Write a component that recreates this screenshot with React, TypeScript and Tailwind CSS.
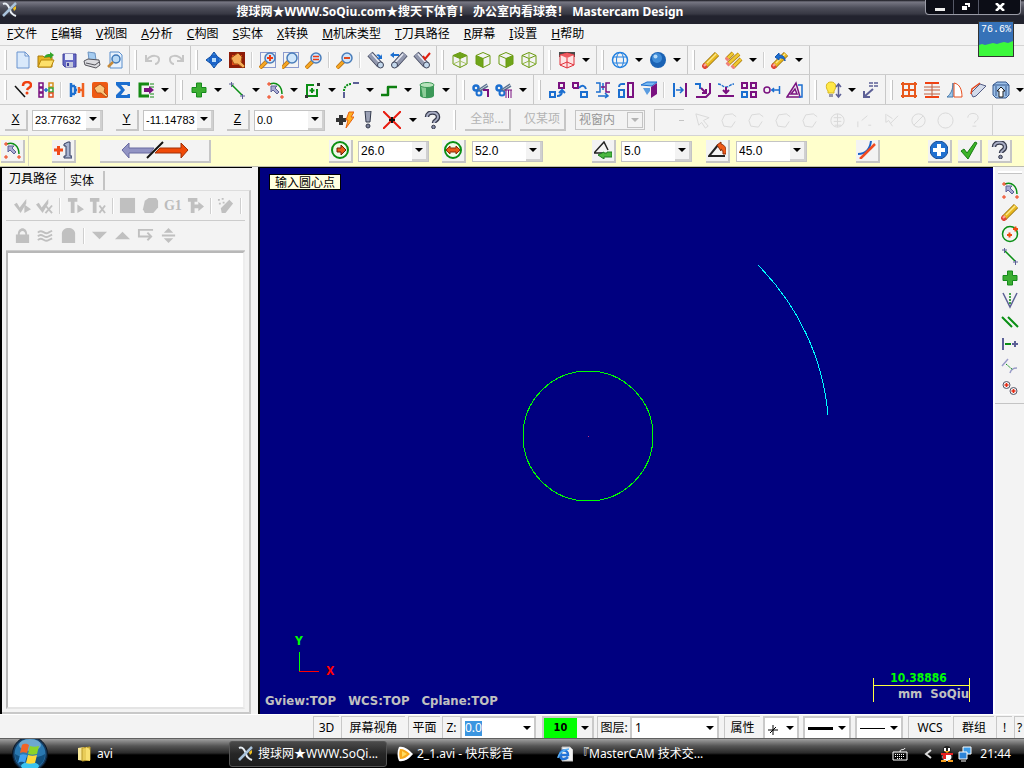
import type { ReactNode } from 'react'
import clsx from 'clsx'

const green = '#0a8f14'
const blue = '#1c6fd0'
const purple = '#7a1280'
const slate = '#5c6096'

const plus = 'M6.5 2h5v4.5h4.5v5h-4.5v4.5h-5v-4.5h-4.5v-5h4.5z'
const question = 'M4 6c0-6 11-6 11 0c0 4-4 3-4 6'
const cube = 'M9 1.5l7 3v8.500l-7 3.500l-7-3.500v-8.500zM2 4.500l7 3l7-3M9 7.500v9'

const lens = (cx = 11, cy = 7) => (
  <>
    <path d={`M${cx - 3} ${cy + 3}L${cx - 10} ${cy + 10}`} stroke="#b06a10" strokeWidth="4" />
    <path d={`M${cx - 3} ${cy + 3}L${cx - 10} ${cy + 10}`} stroke="#f5a623" strokeWidth="2.5" />
    <circle cx={cx} cy={cy} r="5" fill="#cfe6fb" stroke="#4a7dba" strokeWidth="1.5" />
  </>
)

const pencil = (
  <>
    <path d="M3 15L15 3" stroke="#9a7410" strokeWidth="6" />
    <path d="M3 15L15 3" stroke="#e8b820" strokeWidth="4.5" />
    <path d="M5 12L14 3" stroke="#fbe88a" strokeWidth="1.5" />
    <path d="M1 17L4 14" stroke="#e04838" strokeWidth="5.500" />
    <path d="M2 15L4 13" stroke="#fba8a0" strokeWidth="2" />
  </>
)

const flash = (
  <>
    <path d="M3 3L13 14" stroke="#3c4258" strokeWidth="7" />
    <path d="M3 3L13 14" stroke="#9298ae" strokeWidth="5.500" />
    <path d="M5 3L14 13" stroke="#e8ebf4" strokeWidth="1.500" />
    <circle cx="13.5" cy="14" r="3" fill="#c4d8ec" stroke="#3c4258" />
  </>
)

const scissors = (
  <>
    <circle cx="4" cy="7" r="2.500" fill="none" stroke={blue} strokeWidth="2.5" />
    <circle cx="7" cy="12" r="2.500" fill="none" stroke={blue} strokeWidth="2" />
    <path d="M6 9l9-6M8 10l8-5" stroke="#5b7391" strokeWidth="1.500" />
  </>
)

const arcPoints = (
  <>
    <path d="M4 3c7-3 12 3 12 10" stroke={green} strokeWidth="1.5" fill="none" />
    <path d="M1 3h4M3 1v4M1 16h4M3 14v4M14 16h4M16 14v4" stroke="#f03a10" />
    <path d="M5 5h6l-2 2l4 4l-2 2l-4-4l-2 2z" fill="#a9abd2" stroke={slate} />
  </>
)

const lineEnds = (
  <>
    <path d="M4 4l10 10" stroke={green} strokeWidth="1.5" />
    <path d="M1 3h5M3.500 1v5M12 15h5M14.500 13v5" stroke={slate} />
  </>
)

const greenPlus = <path d={plus} fill="#3cae32" stroke="#168a1c" />

const icons: Record<string, ReactNode> = {
  new: <path d="M3 1h8l4 4v12h-12zM11 1v4h4" fill="#d9e9fb" stroke="#6b94cf" />,
  open: (
    <>
      <path d="M1 5h5l1 1h8v10h-14z" fill="#e8b420" stroke="#a8780c" />
      <path d="M4 9h13l-3 7h-13z" fill="#fde06a" stroke="#b8860b" />
      <path d="M7 7c1-4 4-4 6-4v-2l4 3l-4 4v-2c-2 0-4 0-6 1z" fill="#35a52c" />
    </>
  ),
  save: (
    <>
      <path d="M3 3h13v13h-11l-2-2z" fill="#6468c4" stroke="#40409a" />
      <path d="M5 3h8v6h-8z" fill="#e8ecf8" />
      <path d="M6 11h7v5h-7z" fill="#c4c8dc" />
      <path d="M7 12h2v3h-2z" fill="#40409a" />
    </>
  ),
  print: (
    <>
      <path d="M5 1l7 1l1 7h-7z" fill="#a5ccf0" stroke="#6d93c0" />
      <path d="M1 10l4-2l11 1l1 5l-4 3l-11-3z" fill="#dcdce0" stroke="#55555c" />
      <path d="M3 12l9 2l4-3" stroke="#55555c" fill="none" />
    </>
  ),
  preview: (
    <>
      <path d="M4 1h9l3 3v13h-12z" fill="#e8f2fd" stroke="#5b8fcc" />
      <circle cx="10" cy="8" r="4" fill="#b9d9f5" stroke="#3f78b8" strokeWidth="1.500" />
      <path d="M7 11l-5 5" stroke="#c58a3a" strokeWidth="2.500" />
    </>
  ),
  undo: <path d="M2 4v6h6M3 9c4-6 13-5 12 0c0 2-2 4-4 4" stroke="#c6c6c6" strokeWidth="2" fill="none" />,
  redo: <path d="M16 4v6h-6M15 9c-4-6-13-5-12 0c0 2 2 4 4 4" stroke="#c6c6c6" strokeWidth="2" fill="none" />,
  fit: (
    <>
      <path d="M9 1l3 4h-6zM9 17l3-4h-6zM1 9l4-3v6zM17 9l-4-3v6z" fill="#2d7fe0" stroke="#0e4aa0" />
      <path d="M6 6h6v6h-6z" fill="#b9dcfa" stroke="#1c64c8" strokeWidth="2" />
    </>
  ),
  repaint: (
    <>
      <path d="M1 1h16v16h-16z" fill="#8d1c08" />
      <path d="M4 4h10v10h-10z" fill="#e84818" />
      <path d="M3 7l7-5l4 4l-1 5l4 4l-2 2l-5-4l-4 0z" fill="#f5ad58" stroke="#a04a10" />
    </>
  ),
  shade: (
    <>
      <rect x="1" y="1" width="16" height="16" rx="2" fill="#ee5a14" />
      <path d="M3 7l6-4l5 4l-1 4l4 4l-2 1l-5-4h-4z" fill="#f9c57c" stroke="#b4521a" />
    </>
  ),
  zoomWindow: (
    <>
      <path d="M1.500 1.500h15v15h-15z" fill="none" stroke="#2340a8" strokeDasharray="1 1" />
      {lens()}
      <path d="M8 7h6M11 4v6" stroke="#f03a10" strokeWidth="2" />
    </>
  ),
  zoomTarget: (
    <>
      <path d="M1.500 1.500h15v15h-15z" fill="none" stroke="#2340a8" strokeDasharray="1 1" />
      {lens(10, 7)}
    </>
  ),
  unzoom: <>{lens()}<path d="M8 5.500h6M8 8.500h6" stroke="#f03a10" strokeWidth="1.500" /></>,
  zoomOut: <>{lens()}<path d="M8 7h6" stroke="#e04a20" strokeWidth="2" /></>,
  flashNext: <>{flash}<path d="M9 4c3-2 4 0 5 1l1-2v5h-5l2-2z" fill={blue} /></>,
  flashBack: <g transform="translate(18 0) scale(-1 1)">{flash}<path d="M9 3h5v-2l4 3l-4 3v-2h-5z" fill={blue} /></g>,
  flashCheck: <>{flash}<path d="M10 5l2 3l5-6" stroke="#e02010" strokeWidth="2" fill="none" /></>,
  cubeTop: <><path d="M9 1.500l7 3l-7 3l-7-3z" fill="#6fa51a" /><path d={cube} fill="none" stroke="#6a9a10" /><path d="M2 13l7-3l7 3" stroke="#a8c468" fill="none" /></>,
  cubeLeft: <><path d="M2 4.500l7 3v9l-7-3.500z" fill="#6fa51a" /><path d={cube} fill="none" stroke="#6a9a10" /></>,
  cubeRight: <><path d="M16 4.500l-7 3v9l7-3.500z" fill="#6fa51a" /><path d={cube} fill="none" stroke="#6a9a10" /></>,
  cubeIso: <><path d={cube} fill="none" stroke="#6a9a10" /><path d="M2 13l7-3l7 3M9 2v8" stroke="#8fb540" fill="none" /></>,
  cubeRed: (
    <>
      <path d="M1 1h16v5h-16z" fill="#4a4a4a" />
      <path d="M2 4l7-2l7 2v10l-7 3l-7-3z" fill="#fde4e4" stroke="#e0303a" />
      <path d="M2 4l7-2l7 2l-7 3z" fill="#ef5a60" />
      <path d="M9 7v10M2 14l7-3l7 3" stroke="#e0303a" fill="none" />
    </>
  ),
  globe: (
    <g fill="none" stroke="#2280e0">
      <circle cx="9" cy="9" r="7.500" strokeWidth="1.500" />
      <ellipse cx="9" cy="9" rx="3.500" ry="7.500" />
      <path d="M2 6h14M2 12h14" />
    </g>
  ),
  sphere: (
    <>
      <circle cx="9" cy="9" r="8" fill="#1a62b4" />
      <circle cx="8" cy="7" r="5" fill="#3f8cd8" />
      <circle cx="6.500" cy="5.500" r="2" fill="#b4daf8" />
    </>
  ),
  pencil,
  pencils: (
    <>
      <path d="M2 8l6-6M3 13l11-10M8 16l8-8" stroke="#a87a10" strokeWidth="4" />
      <path d="M2 8l6-6M3 13l11-10M8 16l8-8" stroke="#f0c830" strokeWidth="2.500" />
      <path d="M1 9l2-2M2 14l2-2M7 17l2-2" stroke="#f08078" strokeWidth="4" />
    </>
  ),
  pencilUndo: <>{pencil}<path d="M4 6l4-4v2c4 0 6 2 6 6c-1-3-3-3-6-3v2z" fill={blue} stroke="#1556b0" /></>,
  ask: (
    <>
      <path d="M1 5l10 11" stroke="#111" strokeWidth="1.500" />
      <path d="M9 5c0-5 8-5 8-1c0 3-3 2-4 5" stroke="#f04010" strokeWidth="2.500" fill="none" />
      <circle cx="13" cy="12" r="1.500" fill="#f04010" />
    </>
  ),
  chain: (
    <g fill="none" strokeWidth="1.500">
      <path d="M2 2h4v4h-4zM2 7h4v4h-4zM2 12h4v4h-4z" stroke={purple} />
      <path d="M12 2h4v4h-4z" stroke="#d89020" />
      <path d="M12 7h4v4h-4z" stroke="#38a030" />
      <path d="M12 12h4v4h-4z" stroke="#e05020" />
      <path d="M7 9h4M9 7v4" stroke={blue} />
    </g>
  ),
  analyze: (
    <g strokeWidth="3" fill="none">
      <path d="M3 2v14M3 5h4M3 13h4M7 5v8M7 9h2" stroke={blue} strokeWidth="2.5" />
      <path d="M15 2v14M11 9h4M11 6v6" stroke="#f06020" strokeWidth="2.5" />
    </g>
  ),
  sigma: <path d="M2 1h14v4h-2l-1-1h-6l4 5l-4 5h6l1-1h2v4h-14v-3l5-5l-5-5z" fill={blue} />,
  exit: (
    <>
      <path d="M12 3h-9v12h9" stroke="#158a14" strokeWidth="3" fill="none" />
      <path d="M14 2v5M16 2v5M14 12v5M16 12v5" stroke="#158a14" strokeDasharray="2 1" />
      <path d="M7 7h5v-2l5 4l-5 4v-2h-5z" fill={purple} />
    </>
  ),
  plus: greenPlus,
  line: lineEnds,
  arc: arcPoints,
  rect: (
    <g fill="none">
      <path d="M10 4h-7v11h10v-7" stroke={green} strokeWidth="2" />
      <path d="M8 7v5M5.500 9.500h5" stroke={green} strokeWidth="2" />
      <path d="M13 2h3v3h-3zM1 14h3v3h-3z" fill="#333" />
    </g>
  ),
  fillet: <><path d="M2 17v-6" stroke={slate} strokeWidth="2" /><path d="M2 10c0-4 3-7 7-7" stroke={green} strokeWidth="2" strokeDasharray="2 1" fill="none" /><path d="M11 2h6" stroke={slate} strokeWidth="2" /></>,
  spline: <path d="M1 14h7v-8h9" stroke="#0d7f10" strokeWidth="2.5" strokeLinejoin="round" fill="none" />,
  cylinder: (
    <>
      <path d="M2 4v11c2 3 12 3 14 0v-11z" fill="#3c9858" />
      <path d="M3 5h5v11h-3z" fill="#8ccc98" />
      <ellipse cx="9" cy="4" rx="7" ry="2.500" fill="#b8e4bc" stroke="#3c9858" />
    </>
  ),
  trim: <>{scissors}<path d="M11 9h5v7" stroke={purple} strokeWidth="2" fill="none" /></>,
  trimMany: <>{scissors}<path d="M10 9h7M11 9v8M13.500 9v8M16 9v8" stroke={purple} /></>,
  translate: <g fill="none" strokeWidth="2"><path d="M11 2h5v5h-5z" stroke={purple} /><path d="M2 11h5v5h-5z" stroke={blue} /><path d="M9 15c4 0 5-2 5-5M11 12l3-3l3 3" stroke={blue} /></g>,
  rotate: <g fill="none" strokeWidth="2"><path d="M2 7v-5h5v5h-5" stroke={purple} /><path d="M10 11h6v5h-6zM8 7c3-4 6-2 7 1" stroke={blue} /></g>,
  mirror: <g fill="none" strokeWidth="1.500"><path d="M2 2h4v9h-4M9 2v7" stroke={blue} /><path d="M16 2h-4v9h4M7 6h4" stroke={purple} /><path d="M4 15h10M11 12l3 3l-3 2" stroke={blue} /></g>,
  scale: <g fill="none" strokeWidth="2"><path d="M2 9h5v7h-5zM2 6c0-4 4-3 6-3" stroke={blue} /><path d="M11 2h5v14h-5z" stroke={purple} /></g>,
  project: <><path d="M1 4l6-3h10l-5 4z" fill="#78b8f0" stroke={blue} /><path d="M3 7h7v3l-3 4z" fill="#5a9ce0" /><path d="M11 6l6-4v11l-6 4z" fill={purple} /></>,
  between: <g fill="none" strokeWidth="2"><path d="M3 2v14" stroke={blue} /><path d="M15 2v14" stroke={purple} /><path d="M5 9h7M9 6l3 3l-3 3" stroke={blue} strokeWidth="1.500" /></g>,
  corner: <g fill="none" strokeWidth="2"><path d="M1 3h5v5" stroke={blue} /><path d="M16 2v10l-4 4h-10M7 7l4 4M12 8v4h-4" stroke={purple} /></g>,
  down: <g fill="none" strokeWidth="2"><path d="M1 3c4 0 4 3 8 3s4-3 8-3" stroke={blue} strokeDasharray="3 1" strokeWidth="1.500" /><path d="M1 15h16M9 6v6M6 9l3 3l3-3" stroke={purple} /></g>,
  array: <g fill="none" strokeWidth="2"><path d="M2 2h5v5h-5zM11 2h5v5h-5zM11 11h5v5h-5z" stroke={purple} /><path d="M2 11h5v5h-5z" stroke={blue} /></g>,
  offset: <g fill="none" strokeWidth="1.500"><circle cx="4" cy="9" r="3" stroke={purple} /><path d="M8 9h8M16.500 5v8M11 7l-2 2l2 2" stroke={blue} /></g>,
  triangle: <g fill="none" strokeWidth="1.500"><path d="M1 16l9-14l4 14zM5 13h6l-2-5z" stroke={purple} /><path d="M12 4h4v12h-3" stroke={blue} /></g>,
  bulb: (
    <>
      <path d="M7 1c-5 0-6 5-3 9v2h6v-2c3-4 2-9-3-9" fill="#ffe848" stroke="#d8b820" />
      <path d="M5 13h4v3h-4z" fill="#99a" />
      <path d="M14.500 4v11M12 6l2.500-3l2.500 3M12 13l2.500 3l2.500-3" stroke={slate} strokeWidth="1.500" fill="none" />
    </>
  ),
  note: <><path d="M7 2h10M7 5h10" stroke={slate} strokeDasharray="4 1" strokeWidth="1.500" /><path d="M11 8l-8 7M2 10v6h6" stroke={slate} strokeWidth="2" fill="none" /></>,
  grid: <path d="M3 1v16M15 1v16M1 3h16M1 15h16M9 3v12M3 9h12" stroke="#e8581c" strokeWidth="2" />,
  ruled: <><path d="M2 2h14M2 16h14" stroke="#f04010" strokeWidth="2" /><path d="M1 6h16M1 9h16M1 13h16M9 2v14" stroke="#c06040" /></>,
  revolve: <><path d="M1 16c4-3 6-8 6-14v14z" fill="#9cc8ec" stroke="#4878a8" /><path d="M8 2c6 1 8 7 8 14h-8z" fill="#fff" stroke="#e85020" /></>,
  sweep: <><path d="M2 12l9-9l6 2l-10 10l-3 1z" fill="#d4dceb" stroke="#535c84" /><path d="M2 13l1-5l8-6" stroke="#e04820" fill="none" strokeWidth="1.500" /></>,
  extrude: <><path d="M1 4l4-3h9l3 3v10l-3 3h-10l-3-3z" fill="#9cc0e8" stroke="#34568c" /><path d="M4 5v10M14 5v10M1 4h16" stroke="#34568c" /><path d="M9 6l4 4h-2v6h-4v-6h-2z" fill="#fff" stroke="#222" /></>,
  circlePoints: <><circle cx="9" cy="9" r="7.500" fill="none" stroke={green} strokeWidth="1.500" /><path d="M6 10h5M8.500 7.500v5M12 4h5M14.500 1.500v5" stroke="#f04a10" strokeWidth="2" /></>,
  bisect: <><path d="M2 2l7 14l7-14" fill="none" stroke={slate} strokeWidth="1.500" /><path d="M9 2v12" stroke={green} strokeDasharray="2 1" strokeWidth="1.500" /></>,
  parallel: <path d="M1 4l10 10M7 4l10 10" stroke={green} strokeWidth="2" />,
  perp: <><path d="M2 3v12M11 9h6M14 6v6" stroke={slate} strokeWidth="2" /><path d="M4 9h6" stroke={green} strokeWidth="2" /></>,
  tangent: <><path d="M1 9l6-7M9 16c1-4 4-5 7-5" stroke="#9a9cc8" strokeWidth="1.500" fill="none" /><path d="M5 7l7 6" stroke={green} strokeDasharray="2 1" /></>,
  circles: <><circle cx="5.500" cy="6" r="3.500" fill="none" stroke="#556" /><circle cx="12.500" cy="12" r="3.500" fill="none" stroke="#556" /><path d="M3.500 6h4M5.500 4v4M10.500 12h4M12.500 10v4" stroke="#e82810" strokeWidth="1.500" /></>,
  fastPoint: <><path d="M0 9h10M5 4v10" stroke="#333" strokeWidth="4" /><path d="M13 1h5l-3 5h3l-8 11l2-8h-2z" fill="#ffb020" stroke="#e86010" /></>,
  exclaim: <><path d="M6 0h6l-1 11h-4z" fill="#9aa0b4" stroke="#333a4c" /><circle cx="9" cy="15" r="2" fill="#7a8098" stroke="#333a4c" /></>,
  cross: <><path d="M0 0l18 18M18 0l-18 18" stroke="#e81c10" strokeWidth="2" /><path d="M6 9h6M9 6v6" stroke="#111" strokeWidth="2" /></>,
  help: (
    <>
      <path d={question} fill="none" stroke="#363a4c" strokeWidth="4.500" />
      <path d={question} fill="none" stroke="#a8adc4" strokeWidth="2" />
      <circle cx="10.500" cy="16" r="1.800" fill="#888ea8" stroke="#363a4c" />
    </>
  ),
  plusOne: <><path d="M0 9h9M4.500 5v9" stroke="#f04a18" strokeWidth="3" /><path d="M10 3l4-2h2v14h2v2h-8v-2h2v-10h-2z" fill="#a8b4d0" stroke="#303c60" /></>,
  radius: <><circle cx="9" cy="9" r="8" fill="#eefae8" stroke={green} strokeWidth="2" /><path d="M6 7h4v-3l5 5l-5 5v-3h-4z" fill="#e85a18" stroke="#6a1c08" /></>,
  diameter: <><circle cx="9" cy="9" r="8" fill="#eefae8" stroke={green} strokeWidth="2" /><path d="M2 9l4-4v2h6v-2l4 4l-4 4v-2h-6v2z" fill="#e85a18" stroke="#8c2c08" /></>,
  startAngle: <><path d="M14 9l-4-8l-10 11h9" fill="none" stroke="#222" strokeWidth="1.500" /><path d="M18 11v5h-8v2l-6-4l6-3v1h3v-1z" fill="#4cb840" stroke="#1c7c20" /></>,
  endAngle: <><path d="M10 4l-9 11h16" fill="none" stroke="#222" strokeWidth="2" /><path d="M9 4l4-3v2c4 1 6 5 5 10h-3c0-3 0-4-2-5v2z" fill="#f05a18" stroke="#8c2c08" /></>,
  tangentLine: <><path d="M0 13c8 0 12-5 13-13" fill="none" stroke="#1c64c8" strokeWidth="2" /><path d="M2 18l15-15" stroke="#f04a20" strokeWidth="2.5" /></>,
  apply: <><circle cx="9" cy="9" r="9" fill="#2070d0" stroke="#174a94" /><path d="M3 9h12M9 3v12" stroke="#fff" strokeWidth="4" /></>,
  ok: <path d="M1 10l3-2l3 4l8-11l2 1l-9 16z" fill="#3cb428" stroke="#187c14" />,
}

const grays: Record<string, ReactNode> = {
  checkPlay: <><path d="M0 8l3-2l3 5l7-9v5l-6 10z" /><path d="M11 8l7 5l-7 4z" /></>,
  checkX: <><path d="M0 8l3-2l3 5l7-9v5l-6 10z" /><path d="M10 9l7 8M17 9l-7 8" stroke="#c0c0c0" strokeWidth="2" /></>,
  toolPlay: <path d="M1 1h10v4h-3v12h-4v-12h-3zM11 8l7 5l-7 4z" />,
  toolX: <><path d="M1 1h10v4h-3v12h-4v-12h-3z" /><path d="M11 9l6 8M17 9l-6 8" stroke="#c0c0c0" strokeWidth="2" /></>,
  square: <path d="M1 1h16v16h-16z" />,
  solid: <path d="M3 4l4-3h8l2 3v7l-5 6h-9l-2-4z" />,
  toolNext: <path d="M1 1h10v4h-3v3h4v-3l6 5l-6 5v-3h-4v5h-4v-12h-3z" />,
  post: <path d="M4 12l9-9l4 4l-8 10h-4zM1 2h2v2h-2zM5 1h2v2h-2zM2 6h2v2h-2zM6 5h2v2h-2z" />,
  lock: <path d="M2 8h2c0-9 10-9 10 0h2v9h-14zM6 8h6c0-5-6-5-6 0z" fillRule="evenodd" />,
  waves: <path d="M1 6c4-5 7 3 11 0l4-2M1 10c4-5 7 3 11 0l4-2M1 14c4-5 7 3 11 0l4-2" fill="none" stroke="#c0c0c0" strokeWidth="2" />,
  ghost: <path d="M2 17v-10c0-8 14-8 14 0v10z" />,
  triDown: <path d="M1 5h16l-8 8z" />,
  triUp: <path d="M1 13h16l-8-8z" />,
  insert: <path d="M17 3h-15v7h12M11 6l4 4l-4 4" fill="none" stroke="#c0c0c0" strokeWidth="2" />,
  scroll: <path d="M2 8h14v2h-14zM9 1l5 5h-10zM9 17l5-5h-10z" />,
  // selection bar, embossed and barely visible
  pick: <path d="M2 2l14 4l-6 3l5 6l-3 2l-4-6l-3 3z" />,
  poly: <path d="M3 15l-2-6l3-6l8-1l4 3M3 15l8 1l4-6" />,
  hatch: <><circle cx="9" cy="9" r="7" /><path d="M9 2v14M5 6h8M5 10h8M6 14h7" /></>,
  slash: <path d="M2 16v-6M6 9l6-5M13 14h3" />,
  pen: <path d="M3 2v9l3-2l4 6M8 12l8-8M4 3l6 4" />,
  none: <><circle cx="9" cy="9" r="7" /><path d="M4 14l10-10" /></>,
  ring: <circle cx="9" cy="9" r="8" />,
  faintHelp: <><path d={question} /><path d="M9 15h4" /></>,
}

type Entry = string | { icon: string; drop: boolean }

const d = (icon: string): Entry => ({ icon, drop: true })

const fileBar: Entry[][] = [
  ['new', 'open', 'save', 'print', 'preview'],
  ['undo', 'redo'],
  ['fit', 'repaint', '|', 'zoomWindow', 'zoomTarget', 'unzoom', '|', 'zoomOut', '|', 'flashNext', 'flashBack', 'flashCheck'],
  ['cubeTop', 'cubeLeft', 'cubeRight', 'cubeIso'],
  [d('cubeRed')],
  [d('globe'), d('sphere')],
  ['pencil', d('pencils'), '|', d('pencilUndo')],
]

const sketchBar: Entry[][] = [
  ['ask', 'chain', '|', 'analyze', 'shade', 'sigma', d('exit')],
  [d('plus'), d('line'), d('arc'), d('rect'), d('fillet'), d('spline'), d('cylinder')],
  ['trim', d('trimMany')],
  ['translate', 'rotate', 'mirror', 'scale', 'project', '|', 'between', 'corner', 'down', 'array', 'offset', 'triangle'],
  [d('bulb'), 'note'],
  ['grid', 'ruled', 'revolve', 'sweep', d('extrude')],
]

const menu = [
  ['F', '文件'], ['E', '编辑'], ['V', '视图'], ['A', '分析'], ['C', '构图'], ['S', '实体'], ['X', '转换'],
  ['M', '机床类型'], ['T', '刀具路径'], ['R', '屏幕'], ['I', '设置'], ['H', '帮助'],
]

const Icon = ({ name }: { name: string }) => (
  <svg viewBox="0 0 18 18" className="size-[18px] shrink-0" fill="none">
    {icons[name]}
  </svg>
)

const GrayIcon = ({ name, faint }: { name: string; faint?: boolean }) => (
  <svg
    viewBox="0 0 18 18"
    className="size-[17px] shrink-0"
    fill={faint ? 'none' : '#c0c0c0'}
    stroke={faint ? '#d2d2d2' : 'none'}
  >
    {grays[name]}
  </svg>
)

const Caret = () => (
  <svg viewBox="0 0 8 4" className="h-1 w-2 shrink-0">
    <path d="M0 0h8l-4 4z" fill="currentColor" />
  </svg>
)

const Divider = () => <span className="mx-[3px] h-4 w-[2px] shrink-0 border-l border-[#cfcfcf] bg-white" />

const Grip = () => <span className="h-5 w-[3px] shrink-0 border-r border-[#c4c4c4] bg-white" />

const Group = ({ entries, wide }: { entries: Entry[]; wide?: boolean }) => (
  <div className={clsx('flex shrink-0 items-center border-r border-[#c8c8c8] pr-[3px]', wide ? 'pl-[5px]' : 'pl-1')}>
    <Grip />
    <div className="ml-1 flex items-center">
      {entries.map((e, i) => {
        if (e === '|') return <Divider key={i} />
        const name = typeof e === 'string' ? e : e.icon
        return (
          <div key={i} className="flex items-center">
            <button aria-label={name} className="flex h-6 w-[23px] items-center justify-center">
              <Icon name={name} />
            </button>
            {typeof e !== 'string' && (
              <button aria-label={`${name} options`} className="flex h-6 w-[15px] items-center justify-center">
                <Caret />
              </button>
            )}
          </div>
        )
      })}
    </div>
  </div>
)

const raised = 'flex shrink-0 items-center justify-center border-r-2 border-b-2 border-[#c6c6c6] bg-[#f3f3f3]'

const IconButton = ({ icon }: { icon: string }) => (
  <button aria-label={icon} className={clsx(raised, 'h-[23px] w-6')}>
    <Icon name={icon} />
  </button>
)

const Combo = ({ label, value }: { label: string; value: string }) => (
  <div className="flex h-[21px] w-[71px] shrink-0 border border-[#c4c4c4] bg-white">
    <input aria-label={label} defaultValue={value} className="w-0 flex-1 bg-white pl-[2px] outline-none" />
    <button aria-label={`${label} list`} className="flex w-4 items-center justify-center border-r-2 border-b-2 border-[#d0d0d0] bg-[#f3f3f3]">
      <Caret />
    </button>
  </div>
)

const Logo = () => (
  <svg viewBox="0 0 16 16" className="size-4 shrink-0">
    <path d="M1 2c4-2 6 3 7 6c1 4 3 5 6 6" stroke="#e8eef4" strokeWidth="2" fill="none" />
    <path d="M14 1l-5 5l-8 8" stroke="#aac4dc" strokeWidth="2.500" fill="none" />
    <path d="M11 6l3-2v3l-2 2z" fill="#f0c020" />
  </svg>
)

const TitleBar = () => (
  <header className="relative flex h-6 shrink-0 items-center justify-center bg-[linear-gradient(#14141a_0,#777783_2px,#4c4d59_8px,#373843_14px,#22232e_16px,#22232e)] text-[12px] font-bold text-white">
    <div className="absolute left-[2px] top-[2px]"><Logo /></div>
    <h1 className="mr-[104px]">搜球网★WWW.SoQiu.com★搜天下体育！ 办公室内看球赛！ Mastercam Design</h1>
    <div className="absolute top-0 right-[3px] flex h-[15px] overflow-hidden rounded-b border border-t-0 border-[#9a9ba6] bg-[#0c0d16]">
      <button aria-label="minimize" className="flex w-7 items-center justify-center border-r border-[#555866]">
        <span className="mt-1 h-[3px] w-[10px] bg-[#eee]" />
      </button>
      <button aria-label="restore" className="flex w-[25px] items-center justify-center border-r border-[#555866]">
        <svg viewBox="0 0 10 8" className="h-2 w-[10px]"><path d="M4 0h5v4h-2v-2h-3zM1 3h5v4h-5z" fill="#fff" /></svg>
      </button>
      <button aria-label="close" className="flex w-[41px] items-center justify-center">
        <svg viewBox="0 0 10 8" className="h-2 w-[10px]"><path d="M1 0l8 8M9 0l-8 8" stroke="#fff" strokeWidth="2.500" /></svg>
      </button>
    </div>
  </header>
)

const CpuMeter = () => (
  <div className="absolute top-[21px] right-[10px] flex h-9 w-9 flex-col justify-between border border-[#333] bg-[#3672b8] text-white">
    <span className="text-center font-['Liberation_Mono'] text-[10px] leading-[15px]">76.6%</span>
    <svg viewBox="0 0 34 15" className="h-[15px] w-full">
      <path d="M0 15v-11l3-1l3 1l4-1l4-1l4 1l3-1l4-1l4 1l5-2v15z" fill="#3cf83c" />
    </svg>
  </div>
)

const CoordinateBar = () => (
  <div className="flex h-[31px] items-center overflow-hidden border-b border-[#d4d4d4] pl-[5px]">
    <div className="flex items-center gap-[13px] font-['Liberation_Sans'] text-[12px]">
      {[['X', '23.77632'], ['Y', '-11.14783'], ['Z', '0.0']].map(([axis, value]) => (
        <div key={axis} className="flex items-center gap-1">
          <button className={clsx(raised, 'h-[21px] w-[23px] underline')}>{axis}</button>
          <div className="text-[11px]"><Combo label={axis} value={value} /></div>
        </div>
      ))}
    </div>
    <div className="ml-2 flex items-center">
      <button aria-label="fast point" className="flex w-[23px] justify-center"><Icon name="fastPoint" /></button>
      <button aria-label="exclaim" className="flex w-[23px] justify-center"><Icon name="exclaim" /></button>
      <button aria-label="cross" className="flex w-[26px] justify-center"><Icon name="cross" /></button>
      <button aria-label="cross options" className="flex w-[15px] justify-center"><Caret /></button>
      <button aria-label="help" className="flex w-[23px] justify-center"><Icon name="help" /></button>
    </div>
    <div className="ml-[10px] flex items-center gap-[9px] text-[12px] text-[#b4b4b4]">
      <Grip />
      <button disabled className={clsx(raised, 'h-[22px] w-[46px]')}>全部...</button>
      <button disabled className={clsx(raised, 'h-[22px] w-[46px]')}>仅某项</button>
      <div className="relative h-5 w-[70px]">
        <select aria-label="selection mode" disabled className="h-5 w-full appearance-none border border-[#c4c4c4] pl-[3px] text-[#969696]">
          <option>视窗内</option>
        </select>
        <span className="pointer-events-none absolute top-[2px] right-[2px] flex h-4 w-4 items-center justify-center border border-[#c4c4c4] bg-[#f3f3f3]"><Caret /></span>
      </div>
      <div className="flex h-[22px] w-[30px] items-center justify-end border-t border-l border-[#c8c8c8]"><span className="h-px w-[5px] bg-[#c4c4c4]" /></div>
    </div>
    <div className="ml-[5px] flex h-full flex-1 items-center border-r border-[#c8c8c8] opacity-80">
      {['pick', 'poly', 'poly', 'poly', 'poly', 'hatch', 'slash', 'pen', 'none', 'ring', 'faintHelp'].map((n, i) => (
        <button key={i} disabled aria-label={n} className="flex w-[27px] shrink justify-center"><GrayIcon name={n} faint /></button>
      ))}
    </div>
    <div className="w-[31px] shrink-0" />
  </div>
)

const ArcBar = () => (
  <div className="flex h-[31px] items-center overflow-hidden border-b border-[#bdbdb0] bg-[#ffffcc] font-['Liberation_Sans'] text-[12px]">
    <div className="flex h-full w-[29px] shrink-0 items-center border-r border-[#d8d8c0] pl-px"><IconButton icon="arc" /></div>
    <div className="ml-[23px] flex items-center gap-6">
      <IconButton icon="plusOne" />
      <button aria-label="flip" className={clsx(raised, 'h-[23px] w-[111px]')}>
        <svg viewBox="0 0 68 18" className="h-[18px] w-[68px]">
          <path d="M1 9l7-7v5h25l-4 5h-21v5z" fill="#9294c4" stroke="#686aa0" />
          <path d="M67 9l-7-7v5h-21l-5 5h26v5z" fill="#f04a08" stroke="#a03008" />
          <path d="M26 17l16-16" stroke="#111" strokeWidth="2" />
        </svg>
      </button>
    </div>
    <div className="ml-[118px] flex items-center gap-[5px]">
      <IconButton icon="radius" />
      <Combo label="radius" value="26.0" />
      <div className="ml-2 flex items-center gap-[6px]">
        <IconButton icon="diameter" />
        <Combo label="diameter" value="52.0" />
      </div>
    </div>
    <div className="ml-[49px] flex items-center gap-[5px]">
      <IconButton icon="startAngle" />
      <Combo label="start angle" value="5.0" />
      <div className="ml-[9px] flex items-center gap-[6px]">
        <IconButton icon="endAngle" />
        <Combo label="end angle" value="45.0" />
      </div>
      <div className="ml-11"><IconButton icon="tangentLine" /></div>
    </div>
    <div className="mr-3 ml-auto flex gap-[6px]">
      <IconButton icon="apply" />
      <IconButton icon="ok" />
      <IconButton icon="help" />
    </div>
  </div>
)

const GrayRow = ({ names }: { names: string[] }) => (
  <div className="flex h-[30px] items-center border-b border-[#cccccc] pl-[5px]">
    {names.map((n, i) =>
      n === '|' ? (
        <Divider key={i} />
      ) : (
        <button key={i} aria-label={n} disabled className="flex w-[23px] justify-center">
          {n === 'G1' ? <span className="font-['Liberation_Serif'] text-[14px] leading-4 font-bold text-[#bcbcbc]">G1</span> : <GrayIcon name={n} />}
        </button>
      ),
    )}
  </div>
)

const OperationsPanel = () => (
  <aside className="flex w-[252px] shrink-0 flex-col border-t border-l-2 border-black bg-[#f3f3f3] pr-px">
    <div className="flex h-[22px] text-[12px]">
      <button className="w-[63px] border-r border-[#c4c4c4]">刀具路径</button>
      <button className="mt-[3px] w-10 border-r-2 border-[#c4c4c4] pr-1 leading-[18px]">实体</button>
    </div>
    <div className="flex flex-1 flex-col border-t border-r-2 border-b-2 border-t-[#dddddd] border-r-[#c8c8c8] border-b-[#c8c8c8] pr-[4px] pb-[3px] pl-[4px]">
      <GrayRow names={['checkPlay', 'checkX', '|', 'toolPlay', 'toolX', '|', 'square', 'solid', 'G1', 'toolNext', '|', 'post', '|']} />
      <GrayRow names={['lock', 'waves', 'ghost', '|', 'triDown', 'triUp', 'insert', 'scroll']} />
      <div className="flex-1 border-2 border-t-[#b8b8b8] border-r-[#eeeeee] border-b-[#e4e4e4] border-l-[#b8b8b8] bg-white" />
    </div>
  </aside>
)

const Viewport = () => (
  <main className="relative ml-[6px] flex flex-1 flex-col justify-between border-t border-l-2 border-black bg-[#000080] font-['DejaVu_Sans_Condensed'] text-[13px] font-bold text-[#c0c0c0]">
    <svg viewBox="0 0 733 546" className="absolute inset-0 h-full w-full" fill="none" shapeRendering="crispEdges">
      <circle cx="328" cy="268" r="65" stroke="#00ff00" />
      <path d="M328 268h1" stroke="#c03080" />
      <path d="M498.400 97.600A241 241 0 0 1 568 247" stroke="#00ffff" />
    </svg>
    <div className="relative mt-[6px] ml-[9px] h-4 w-[72px] border border-black bg-[#ffffe1] text-center font-['Noto_Sans_CJK_SC'] text-[12px] leading-[14px] font-normal text-black">
      输入圆心点
    </div>
    <div className="relative flex items-end justify-between pr-[23px] pb-[5px] pl-[5px]">
      <div>
        <div className="ml-[30px] text-[12px] leading-4 text-[#00ff00]">Y</div>
        <div className="mb-[14px] ml-[34px] flex h-[30px] items-end">
          <svg viewBox="0 0 22 22" className="mb-[6px] h-[22px] w-[22px]" shapeRendering="crispEdges">
            <path d="M0.500 1v20" stroke="#00ff00" />
            <path d="M0 20.500h20" stroke="#ff0000" />
          </svg>
          <span className="ml-[5px] text-[12px] leading-4 text-[#ff0000]">X</span>
        </div>
        <div className="flex gap-3 leading-4">
          <span>Gview:TOP</span>
          <span>WCS:TOP</span>
          <span>Cplane:TOP</span>
        </div>
      </div>
      <div className="mb-[7px] w-[97px]">
        <div className="-mb-[6px] pr-[6px] text-center text-[12px] leading-3 text-[#00ff00]">10.38886</div>
        <div className="flex h-6 flex-col border-x border-[#ffff40]">
          <div className="h-3 border-b border-[#ffff40]" />
          <div className="flex justify-end gap-2 leading-[16px]"><span>mm</span><span>SoQiu</span></div>
        </div>
      </div>
    </div>
  </main>
)

const SideBar = () => (
  <nav className="flex w-[31px] shrink-0 flex-col items-end border-l-2 border-white bg-[#f3f3f3] pt-1">
    <div className="mr-[2px] h-[3px] w-6 border-b border-[#c4c4c4] bg-white" />
    <div className="flex w-full flex-col items-center border-b border-[#c4c4c4] pt-[5px] pb-1">
      {['arc', 'pencil', 'circlePoints', 'line', 'plus', 'bisect', 'parallel', 'perp', 'tangent', 'circles'].map((n) => (
        <button key={n} aria-label={`draw ${n}`} className="flex h-[22px] w-[22px] items-center justify-center"><Icon name={n} /></button>
      ))}
    </div>
  </nav>
)

const cell = 'flex h-[22px] shrink-0 items-center justify-center border-t border-l border-[#c8c8c8]'
const field = 'flex h-[22px] shrink-0 items-center justify-between border-2 border-b-0 border-[#cacaca] bg-white pr-[3px] pl-[3px]'

const StatusBar = () => (
  <div className="flex h-6 shrink-0 items-end justify-end overflow-hidden border-t border-white bg-[#f3f3f3] text-[12px] whitespace-nowrap">
    <button className={clsx(cell, 'w-[26px]')}>3D</button>
    <button className={clsx(cell, 'ml-[2px] w-[64px]')}>屏幕视角</button>
    <button className={clsx(cell, 'ml-[3px] w-8')}>平面</button>
    <label htmlFor="depth" className={clsx(cell, 'ml-[2px] w-[18px]')}>Z:</label>
    <div className={clsx(field, 'w-[76px]')}>
      <input id="depth" defaultValue="0.0" className="h-[15px] w-[17px] bg-[#3c96e0] text-white outline-none" />
      <button aria-label="depth list"><Caret /></button>
    </div>
    <div className="ml-[6px] flex h-[22px] w-[52px] border-2 border-b-0 border-[#cacaca]">
      <button className="h-5 w-[33px] bg-[#00ff00] font-['DejaVu_Sans_Condensed'] text-[11px] font-bold">10</button>
      <button aria-label="colour list" className="flex flex-1 items-center justify-center"><Caret /></button>
    </div>
    <label htmlFor="level" className={clsx(cell, 'ml-[3px] w-[33px]')}>图层:</label>
    <div className={clsx(field, 'w-[89px]')}>
      <input id="level" defaultValue="1" className="w-[50px] outline-none" />
      <button aria-label="level list"><Caret /></button>
    </div>
    <button className={clsx(cell, 'ml-[5px] w-9')}>属性</button>
    <button aria-label="point style" className={clsx(field, 'ml-[3px] w-9')}>
      <svg viewBox="0 0 10 10" className="mt-1 size-[10px]"><path d="M0 5h10M5 0v10M2 8l6-6" stroke="#000" /></svg>
      <Caret />
    </button>
    <button aria-label="line style" className={clsx(field, 'ml-1 w-12')}><span className="h-[3px] w-[25px] bg-black" /><Caret /></button>
    <button aria-label="line width" className={clsx(field, 'ml-1 w-12')}><span className="h-px w-[25px] bg-black" /><Caret /></button>
    <button className={clsx(cell, 'ml-[5px] w-[43px]')}>WCS</button>
    <button className={clsx(cell, 'ml-[2px] w-[41px]')}>群组</button>
    <button className={clsx(cell, 'ml-[2px] w-4')}>!</button>
    <button className={clsx(cell, 'ml-[2px] w-[10px]')}>?</button>
  </div>
)

const Task = ({ icon, children, active }: { icon: ReactNode; children: string; active?: boolean }) => (
  <button
    className={clsx(
      'flex h-[26px] w-[158px] shrink-0 items-center gap-1 rounded-[3px] px-2 whitespace-nowrap',
      active && 'border border-[#555] bg-[linear-gradient(#4a4a4a,#262626_50%,#1e1e1e)]',
    )}
  >
    {icon}
    <span>{children}</span>
  </button>
)

const TaskBar = () => (
  <footer className="flex h-[30px] shrink-0 items-center gap-[2px] overflow-hidden border-t border-[#606060] bg-[linear-gradient(#a0a0a0,#555_7px,#2a2a2a_14px,#000_16px,#000)] text-[12px] text-white">
    <button aria-label="start" className="ml-3 w-[55px] shrink-0">
      <svg viewBox="0 0 36 36" className="size-9">
        <circle cx="18" cy="18" r="17.500" fill="#15395c" stroke="#0a1420" />
        <circle cx="18" cy="18" r="15.500" fill="#2a78b0" />
        <path d="M3 18c8 5 22 5 30 0a15 15 0 0 1-30 0z" fill="#12507f" />
        <ellipse cx="18" cy="30" rx="9" ry="4" fill="#3cc4f0" />
        <ellipse cx="18" cy="9" rx="11" ry="6" fill="#8cbcdc" opacity="0.7" />
        <path d="M10 9c3-2 5-1 7 0l-2 8c-3-1-5-1-7 0z" fill="#f06428" />
        <path d="M18 10c3 1 5 1 9 0l-2 8c-3 1-6 1-9 0z" fill="#8cd428" />
        <path d="M8 19c2-1 4-1 7 0l-2 8c-3-2-5-1-7 0z" fill="#40a0f0" />
        <path d="M16 19c3 1 6 1 9 0l-2 8c-4 1-7 1-9 0z" fill="#ffd838" />
      </svg>
    </button>
    <Task
      icon={
        <svg viewBox="0 0 16 16" className="size-4 shrink-0">
          <path d="M1 2l6-1v14l-6-1z" fill="#f8e898" />
          <path d="M5 2l8-1v13l-8 1z" fill="#e8cc58" stroke="#b89828" />
          <path d="M9 1l4 3v11l-4-1z" fill="#f8e070" />
        </svg>
      }
    >
      avi
    </Task>
    <Task active icon={<Logo />}>搜球网★WWW.SoQi...</Task>
    <Task
      icon={
        <svg viewBox="0 0 16 16" className="size-4 shrink-0">
          <path d="M2 1c5-1 9 2 14 7c-4 5-9 8-14 7c-2-4-2-10 0-14" fill="#fff" />
          <path d="M3 3c4 0 7 2 10 5c-3 3-6 5-10 5c-1-3-1-7 0-10" fill="#f8a818" />
          <path d="M5 5l5 3l-5 3z" fill="#ffdc60" />
        </svg>
      }
    >
      2_1.avi - 快乐影音
    </Task>
    <Task
      icon={
        <svg viewBox="0 0 16 16" className="size-4 shrink-0">
          <path d="M5 1h8l3 3v11h-11z" fill="#f4f4f4" stroke="#bbb" />
          <path d="M3 9h8c0-6-8-6-8 0c0 5 5 5 8 2" fill="none" stroke="#2474d8" strokeWidth="2.500" />
          <path d="M1 12c0-4 6-9 11-9" fill="none" stroke="#5cb0f4" strokeWidth="1.500" />
        </svg>
      }
    >
      『MasterCAM 技术交...
    </Task>
    <div className="mr-[13px] ml-auto flex shrink-0 items-center">
      <svg viewBox="0 0 16 14" className="h-[14px] w-4" fill="none">
        <path d="M1 5h14v8h-14zM8 5c0-4 4-1 5-4" stroke="#fff" />
        <path d="M3 7.500h10M3 9.500h10M5 11.500h6" stroke="#fff" strokeDasharray="1 1" />
      </svg>
      <svg viewBox="0 0 8 10" className="ml-4 h-[10px] w-2"><path d="M7 1l-5 4l5 4" stroke="#ddd" strokeWidth="2" fill="none" /></svg>
      <svg viewBox="0 0 14 16" className="ml-2 h-4 w-[14px]">
        <ellipse cx="7" cy="10" rx="6" ry="5.500" fill="#222" />
        <ellipse cx="7" cy="11" rx="4.500" ry="4" fill="#fff" />
        <circle cx="7" cy="4" r="4" fill="#222" />
        <path d="M4 2h2v3h-2zM8 2h2v3h-2z" fill="#fff" />
        <path d="M4 5h6l-3 2z" fill="#ffb020" />
        <path d="M1 7h12v2h-7v4h-3v-4h-2z" fill="#e82020" />
        <path d="M1 14h5v2h-5zM8 14h5v2h-5z" fill="#f8a020" />
      </svg>
      <svg viewBox="0 0 14 16" className="ml-1 h-4 w-[14px]">
        <path d="M5 1h8v7h-8z" fill="#3c9ce8" stroke="#fff" />
        <path d="M1 6h8v7h-8zM3 15h5" fill="#2c84d8" stroke="#fff" />
      </svg>
      <time className="ml-2 leading-4">21:44</time>
    </div>
  </footer>
)

const App = () => {
  return (
    <div className="relative flex h-screen flex-col overflow-hidden bg-[#f3f3f3] font-['Noto_Sans','Noto_Sans_CJK_SC',sans-serif] text-black">
      <TitleBar />
      <nav className="flex h-[21px] shrink-0 items-center gap-[14px] pb-[2px] pl-[7px] text-[12px] leading-4">
        {menu.map(([key, label]) => (
          <a key={key} href="#" className="shrink-0"><span className="underline">{key}</span>{label}</a>
        ))}
      </nav>
      <CpuMeter />
      <div className="flex h-[30px] shrink-0 overflow-hidden border-y border-t-[#d4d4d4] border-b-[#cccccc]">
        {fileBar.map((g, i) => <Group key={i} entries={g} />)}
      </div>
      <div className="flex h-[30px] shrink-0 overflow-hidden border-b border-[#cccccc]">
        {sketchBar.map((g, i) => <Group key={i} entries={g} wide={i === 2} />)}
      </div>
      <div className="shrink-0">
        <CoordinateBar />
        <ArcBar />
      </div>
      <div className="flex min-h-0 flex-1">
        <OperationsPanel />
        <Viewport />
        <SideBar />
      </div>
      <StatusBar />
      <TaskBar />
    </div>
  )
}

export default App
